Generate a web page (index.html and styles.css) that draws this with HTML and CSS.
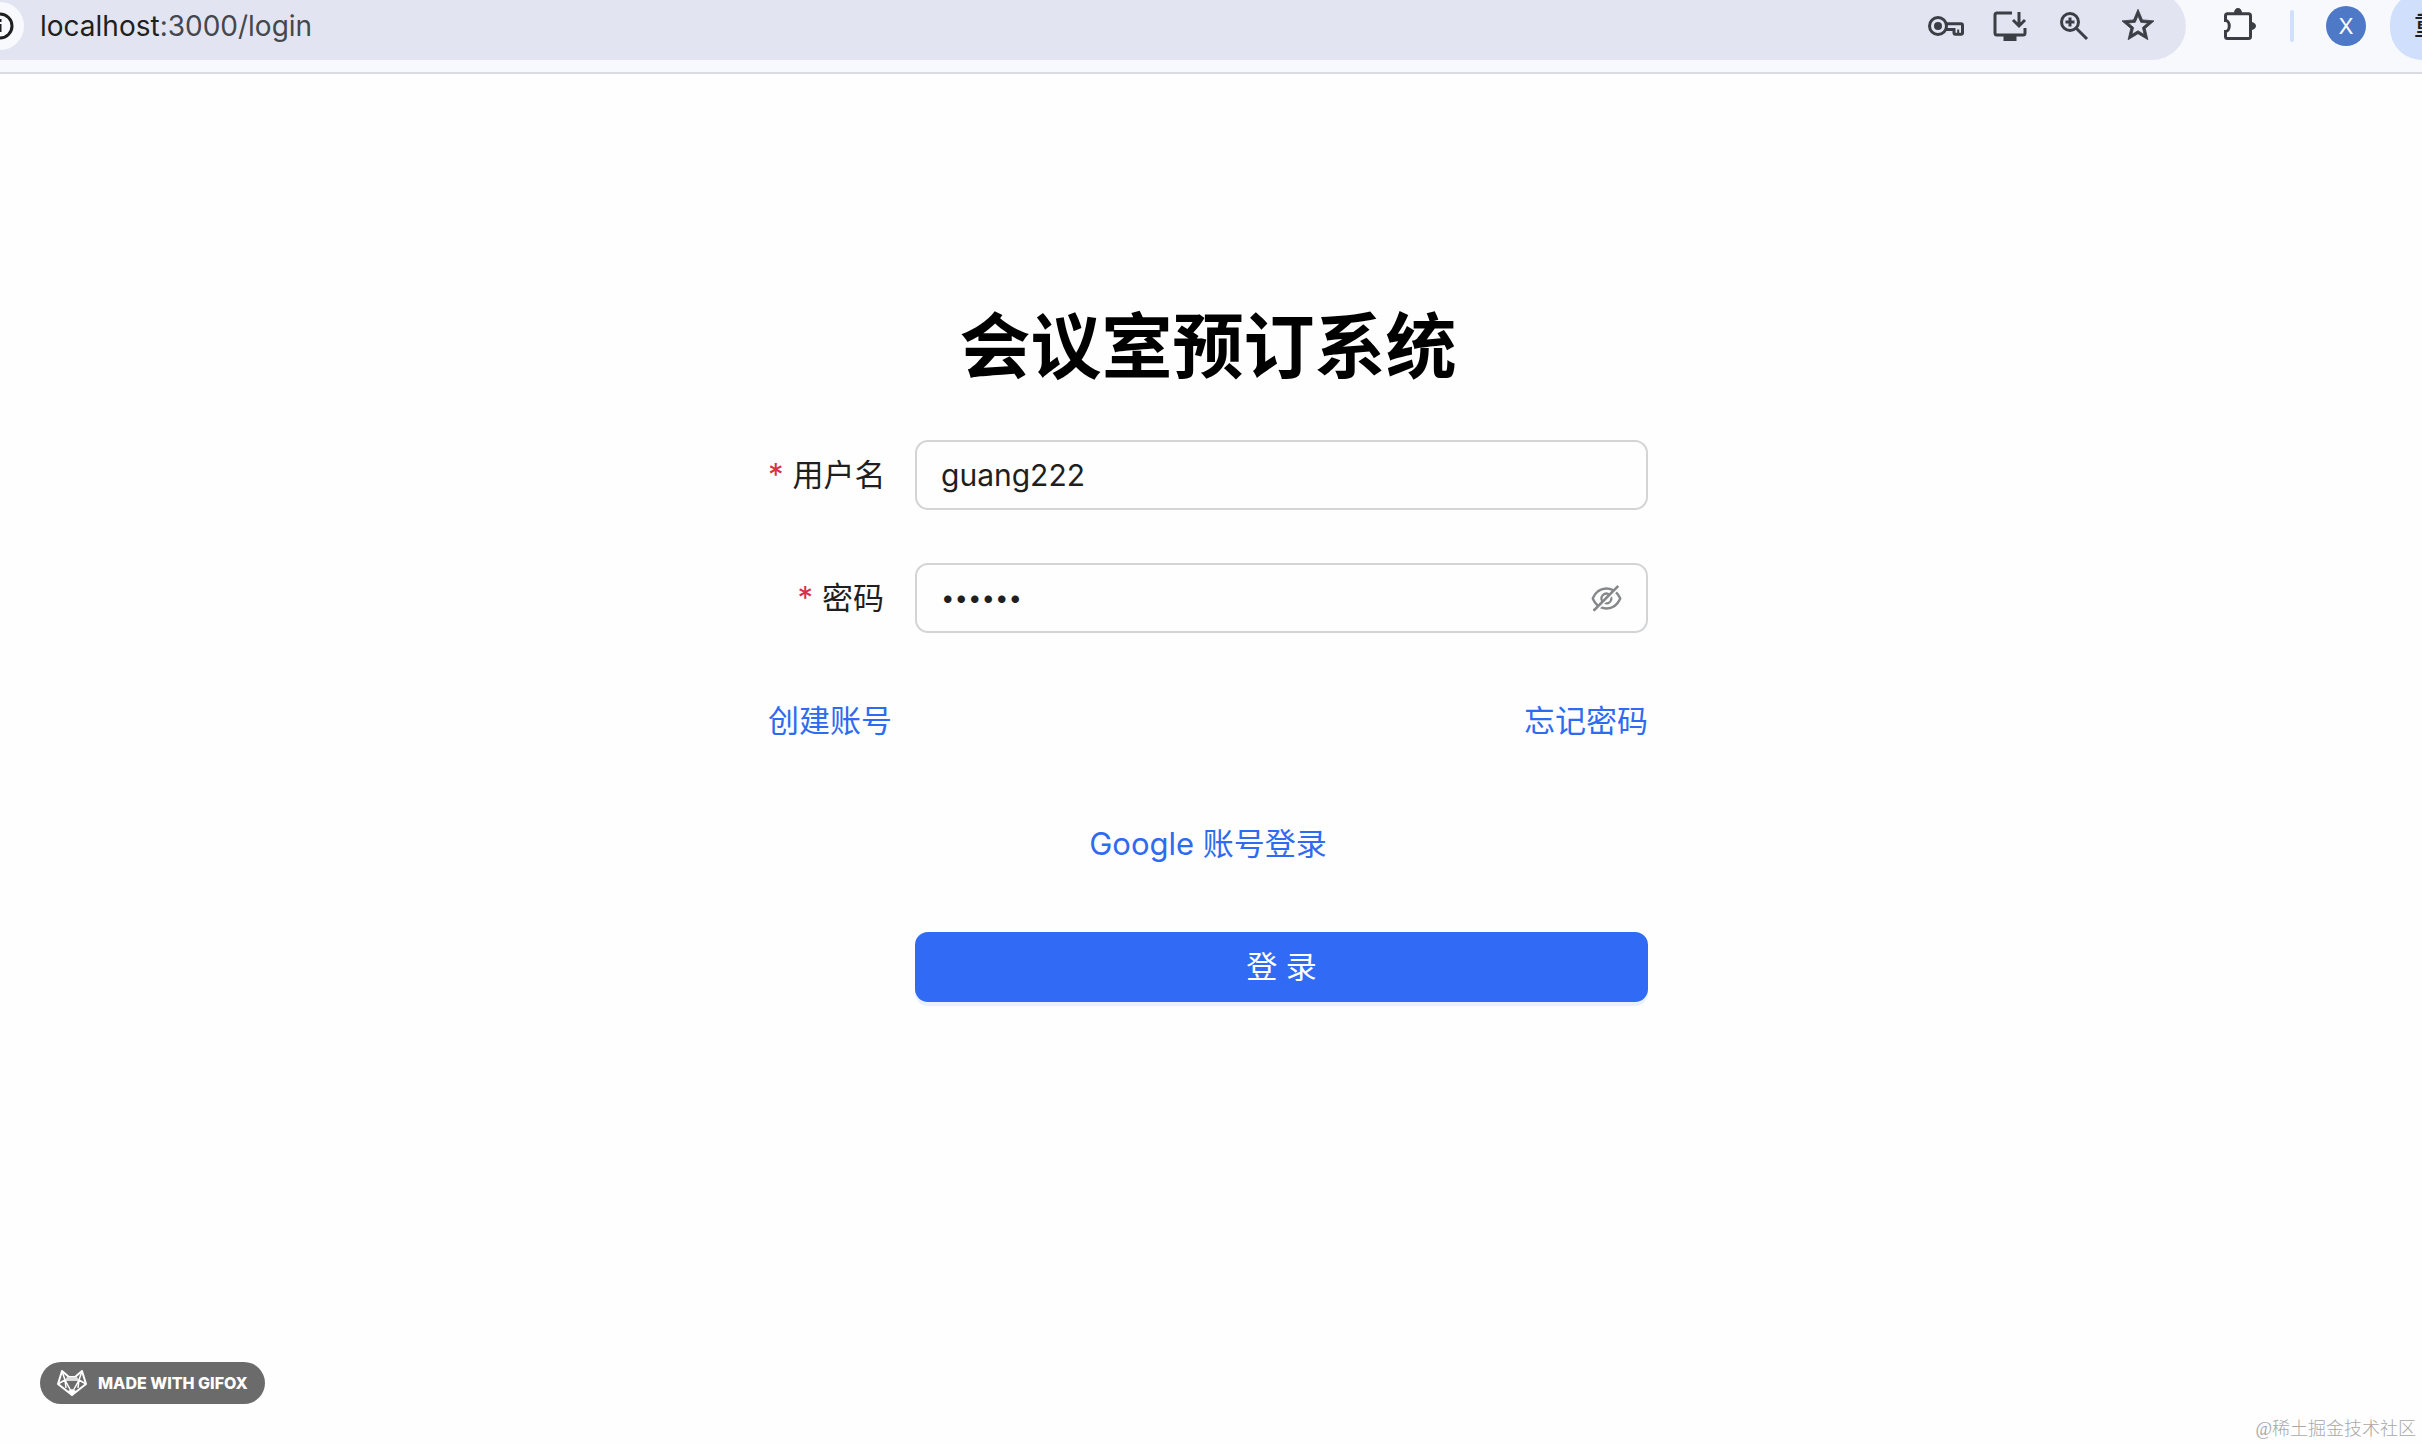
FILE: index.html
```html
<!DOCTYPE html>
<html lang="zh-CN">
<head>
    <meta charset="UTF-8">
    <meta name="viewport" content="width=device-width, initial-scale=1.0">
    <link rel="stylesheet" href="styles.css">
    <title>会议室预订系统</title>
</head>
<body>
    <header class="toolbar">
        <div class="address">
            <button class="site-info" type="button" aria-label="Site info">
                <svg width="48" height="48" viewBox="0 0 48 48">
                    <circle cx="24" cy="24" r="12" fill="none" stroke="#1f1f1f" stroke-width="3"/>
                    <path d="M24 22v8M24 17v3" stroke="#1f1f1f" stroke-width="3"/>
                </svg>
            </button>
            <div class="url"><span class="host">localhost</span>:3000/login</div>
            <div class="actions">
                <button type="button" aria-label="Passwords">
                    <svg class="icon" viewBox="0 0 40 40">
                        <circle cx="12" cy="20" r="8.5"/>
                        <circle class="solid" cx="12" cy="20" r="4"/>
                        <path d="M20 17.8h15q1.5 0 1.5 1.5v7.5q0 1.5-1.5 1.5h-5.5q-1.5 0-1.5-1.5v-3.3h-8"/>
                        <path d="M32.2 23.5v4.5" stroke-width="2"/>
                    </svg>
                </button>
                <button type="button" aria-label="Install">
                    <svg class="icon" viewBox="0 0 40 40">
                        <path d="M22 7H7q-2 0-2 2v18q0 2 2 2h26q2 0 2-2v-5"/>
                        <path class="solid" d="M13.5 29h13v6h-13z"/>
                        <path d="M29 6v13M23 14l6 6 6-6"/>
                    </svg>
                </button>
                <button type="button" aria-label="Zoom">
                    <svg class="icon" viewBox="0 0 40 40">
                        <circle cx="16" cy="16" r="8.5"/>
                        <path d="M22 22l11 11M16 11.5v9M11.5 16h9"/>
                    </svg>
                </button>
                <button type="button" aria-label="Bookmark">
                    <svg class="icon" viewBox="0 0 40 40">
                        <path class="star-shape" transform="translate(.8 .1) scale(1.6)" d="M22 9.24l-7.19-.62L12 2 9.19 8.63 2 9.24l5.46 4.73L5.82 21 12 17.27 18.18 21l-1.63-7.03L22 9.24zM12 15.4l-3.76 2.27 1-4.28-3.32-2.88 4.38-.38L12 6.1l1.71 4.04 4.38.38-3.32 2.88 1 4.28L12 15.4z"/>
                    </svg>
                </button>
            </div>
        </div>
        <button class="extensions" type="button" aria-label="Extensions">
            <svg class="icon" viewBox="0 0 40 40">
                <path d="M7.5 14.5V9.8q0-2 2-2h21q2 0 2 2v20.7q0 2-2 2h-21q-2 0-2-2v-5c5 0 5-11 0-11z"/>
                <path class="solid" d="M16 7a4 5 0 0 1 8 0zM33 16a5 4 0 0 1 0 8z"/>
            </svg>
        </button>
        <span class="divider"></span>
        <button class="avatar" type="button">X</button>
        <button class="update" type="button">重</button>
    </header>

    <main class="page">
        <form class="login">
            <h1>会议室预订系统</h1>
            <div class="row">
                <label for="username"><span class="star">*</span>用户名</label>
                <div class="field"><input id="username" type="text" value="guang222"></div>
            </div>
            <div class="row">
                <label for="password"><span class="star">*</span>密码</label>
                <div class="field">
                    <input id="password" type="password" value="123456">
                    <button class="eye" type="button" aria-label="显示密码">
                        <svg width="35" height="35" viewBox="0 0 1024 1024" fill="currentColor">
                            <path d="M942.2 486.2Q889.47 375.11 816.7 305l-50.88 50.88C807.31 395.53 843.45 447.4 874.7 512 791.5 684.2 673.4 766 512 766q-72.67 0-133.87-22.38L323 798.75Q408 838 512 838q288.3 0 430.2-300.3a60.29 60.29 0 000-51.5zm-63.57-320.64L836 122.88a8 8 0 00-11.32 0L715.31 232.2Q624.86 186 512 186q-288.3 0-430.2 300.3a60.3 60.3 0 000 51.5q56.69 119.4 136.5 191.41L112.48 835a8 8 0 000 11.31L155.17 889a8 8 0 0011.31 0l712.15-712.12a8 8 0 000-11.32zM149.3 512C232.6 339.8 350.7 258 512 258c54.54 0 104.13 9.36 149.12 28.39l-70.3 70.3a176 176 0 00-238.13 238.13l-83.42 83.42C223.1 637.49 183.3 582.28 149.3 512zm246.7 0a112.11 112.11 0 01146.2-106.69L401.31 546.2A112 112 0 01396 512z"/>
                            <path d="M508 624c-3.46 0-6.87-.16-10.25-.47l-52.82 52.82a176.09 176.09 0 00227.42-227.42l-52.82 52.82c.31 3.38.47 6.79.47 10.25a111.94 111.94 0 01-112 112z"/>
                        </svg>
                    </button>
                </div>
            </div>
            <div class="row links">
                <a href="/register">创建账号</a>
                <a href="/update_password">忘记密码</a>
            </div>
            <div class="row google">
                <a href="/google">Google 账号登录</a>
            </div>
            <div class="row submit">
                <button type="submit">登 录</button>
            </div>
        </form>
    </main>

    <div class="gifox">
        <svg width="30" height="28" viewBox="0 0 30 28" fill="none" stroke="#fff" stroke-width="2" stroke-linejoin="round">
            <path d="M5 2L1 15l14 11 14-11L25 2l-7 6h-6z"/>
            <path d="M5 2l3 9 7 13 7-13 3-9M1 15l7-4h14l7 4M8 11l1 8M22 11l-1 8" stroke-width="1.5"/>
            <path d="M11 22l4-2 4 2-4 5z" fill="#fff" stroke="none"/>
            <path d="M10 8h10l2 3H8z" fill="#ddd" stroke="none"/>
        </svg>
        <span>MADE WITH GIFOX</span>
    </div>
    <div class="watermark">@稀土掘金技术社区</div>
</body>
</html>
```
FILE: styles.css
```css
*{
    margin:0;
    padding:0;
    box-sizing: border-box;
}

body{
    position: relative;
    min-height:100vh;
    background-color: #fefefe;
    color:#1f1f1f;
    font-family: Inter, "Noto Sans CJK SC", sans-serif;
    font-size:31px;
    line-height:48px;
}

button{
    border:none;
    background: none;
    font: inherit;
    color: inherit;
    cursor: pointer;
}

svg{
    display:block;
}

a{
    color:#2f6bf0;
    text-decoration: none;
}

/* browser bar, its top is cut off by the window */
.toolbar{
    display:flex;
    align-items: center;
    height:74px;
    padding-bottom:20px;
    overflow: hidden;
    background-color: #f8f9fd;
    border-bottom:2px solid #dadce3;
}

.address{
    flex:1;
    display:flex;
    align-items: center;
    height:68px;
    padding-right:16px;
    background-color: #e2e5f1;
    border-radius: 0 34px 34px 0;
}

.site-info{
    margin-left:-24px;
    border-radius: 50%;
    background-color: #f8f9fd;
}

.url{
    flex:1;
    padding-left:16px;
    font-size:28px;
    color:#45474d;
}

.host{
    color:#1f1f1f;
}

.actions{
    display:flex;
}

.actions button{
    padding:0 12px;
}

.icon{
    width:40px;
    height:40px;
    fill:none;
    stroke:#3c3e45;
    stroke-width:3;
}

.icon .solid{
    fill:#3c3e45;
    stroke:none;
}

.icon .star-shape{
    fill:#3c3e45;
    stroke-width:.5;
}

.extensions{
    margin-left:32px;
}

.divider{
    width:4px;
    height:32px;
    margin:0 32px;
    border-radius: 2px;
    background-color: #cfdffc;
}

.avatar{
    width:40px;
    height:40px;
    border-radius: 50%;
    background-color: #4d79c6;
    color:white;
    font-size:22px;
    line-height:40px;
}

.update{
    width:32px;
    height:68px;
    margin-left:24px;
    padding-left:24px;
    overflow: hidden;
    border-radius: 34px 0 0 34px;
    background-color: #cfdffc;
    font-size:26px;
    font-weight:500;
    text-align: left;
}

.page{
    display:flex;
    justify-content: center;
    padding:222px 6px 0 0;
}

.login{
    width:880px;
}

h1{
    margin-bottom:44px;
    color:black;
    font-size:71px;
    line-height:100px;
    font-weight:700;
    text-align: center;
}

.row{
    display:flex;
    align-items: center;
    height:70px;
    margin-bottom:53px;
}

.row label{
    width:147px;
    padding-right:31px;
    text-align: right;
    white-space: nowrap;
}

.star{
    margin-right:9px;
    color:#d9304a;
}

.field{
    flex:1;
    display:flex;
    align-items: center;
    height:70px;
    padding:0 22px 0 24px;
    border:2px solid #d3d4d6;
    border-radius: 13px;
    background-color: #fefefe;
}

.field input{
    flex:1;
    min-width:0;
    border:none;
    outline: none;
    background: none;
    color: inherit;
    font: inherit;
    font-size:30px;
}

.field input[type="password"]{
    font-size:24px;
}

.eye{
    color:#85878b;
}

.links{
    justify-content: space-between;
}

.google{
    justify-content: center;
}

.submit button{
    flex:1;
    height:70px;
    margin-left:147px;
    border-radius: 13px;
    background-color: #306af5;
    box-shadow: 0 4px 0 #eaf1fd;
    color:white;
}

.gifox{
    position: absolute;
    left:40px;
    bottom:40px;
    display:flex;
    align-items: center;
    gap:11px;
    height:42px;
    padding:0 17px;
    border-radius: 21px;
    background-color: #6b6b6b;
    color:white;
    font-size:16px;
    font-weight:800;
    white-space: nowrap;
}

.watermark{
    position: absolute;
    right:6px;
    bottom:3px;
    color:#a8a8a8;
    font-family: "Liberation Serif", "Noto Sans CJK SC", serif;
    font-size:18px;
    font-weight:300;
    line-height:24px;
}
```
